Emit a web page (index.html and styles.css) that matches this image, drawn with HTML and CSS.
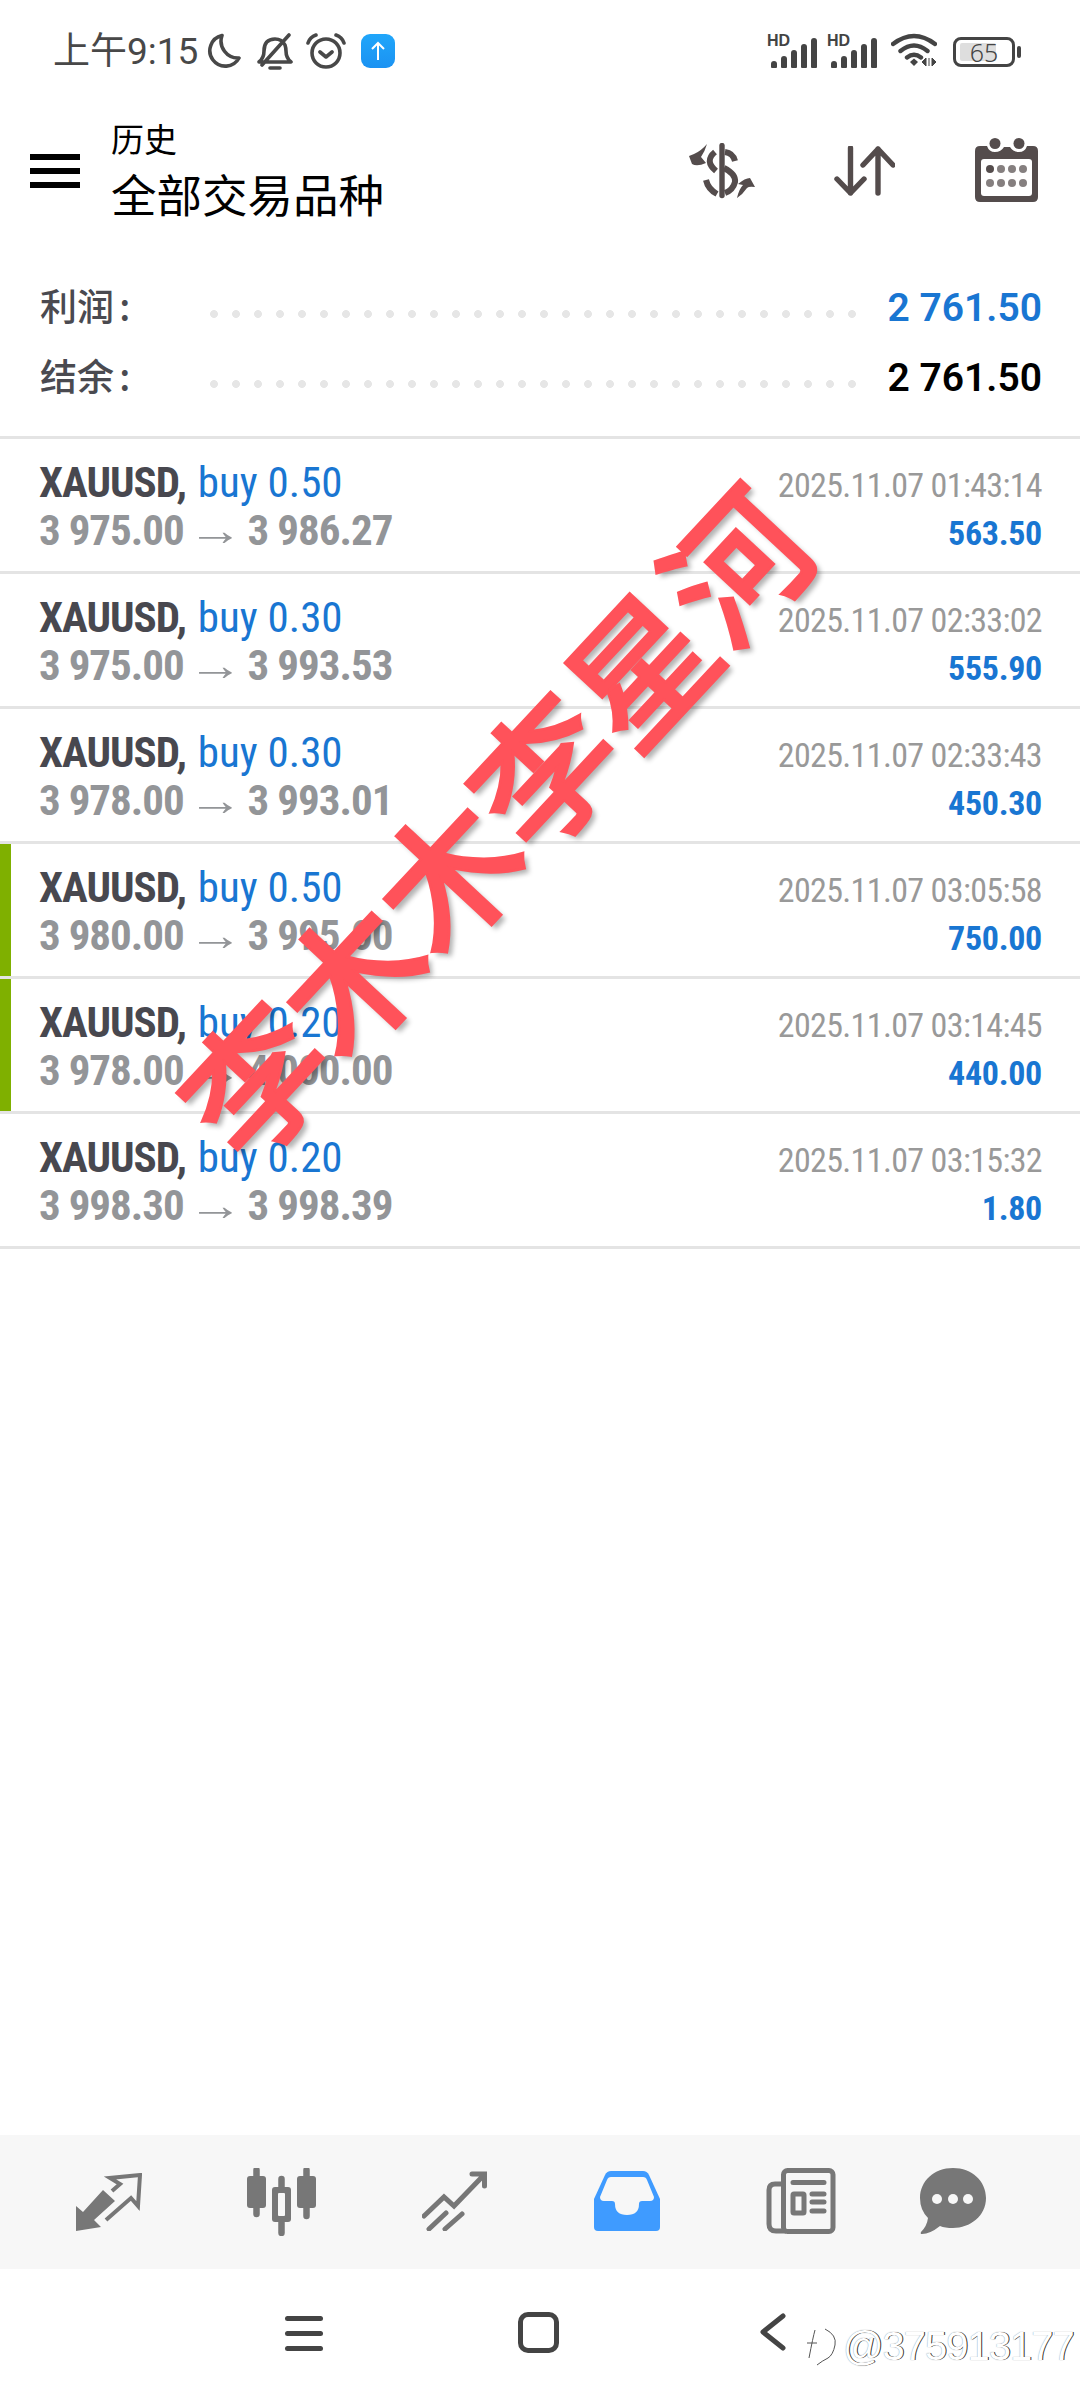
FILE: index.html
```html
<!DOCTYPE html>
<html lang="zh-CN">
<head>
    <meta charset="UTF-8">
    <meta name="viewport" content="width=device-width, initial-scale=1.0">
    <title>历史</title>
    <link rel="stylesheet" href="styles.css">
</head>
<body>
    <!-- 状态栏 -->
    <div class="status-bar">
        <div class="status-left">
            <span class="clock">上午9:15</span>
            <svg class="ic-moon" viewBox="0 0 34 35"><path d="M15 2.5 A15.5 15.5 0 1 0 32 25 A17 17 0 0 1 15 2.5Z" fill="none" stroke="#484848" stroke-width="3.6" stroke-linejoin="round"/></svg>
            <svg class="ic-bell" viewBox="0 0 36 38"><path d="M2 29 Q7 25 7 18 Q7 6 18 6 Q25 6 28 12 Q29 15 29 18 Q29 25 34 29 Z M13 35 H23 M5 32 L32 2" fill="none" stroke="#484848" stroke-width="3.6" stroke-linecap="round" stroke-linejoin="round"/></svg>
            <svg class="ic-alarm" viewBox="0 0 40 36"><circle cx="20" cy="20" r="14" fill="none" stroke="#484848" stroke-width="3.6"/><path d="M14 19 L20 24 L26 19 M2 10 Q4 4 10 2 M38 10 Q36 4 30 2" fill="none" stroke="#484848" stroke-width="3.6" stroke-linecap="round" stroke-linejoin="round"/></svg>
            <span class="app-badge"><svg viewBox="0 0 34 34"><path d="M17 26 V9 M11 15 L17 9 L23 15" fill="none" stroke="#fff" stroke-width="2"/></svg></span>
        </div>
        <div class="status-right">
            <span class="signal"><b>HD</b><i class="s1"></i><i class="s2"></i><i class="s3"></i><i class="s4"></i><i class="s5"></i></span>
            <span class="signal"><b>HD</b><i class="s1"></i><i class="s2"></i><i class="s3"></i><i class="s4"></i><i class="s5"></i></span>
            <svg class="ic-wifi" viewBox="0 0 46 34"><path d="M2 11 Q23 -5 44 11 M9.5 18 Q23 7 36.5 18 M16 24.5 Q23 19 30 24.5" fill="none" stroke="#444" stroke-width="4.4" stroke-linecap="round"/><path d="M19 29 L23 25.5 L27 29 L23 33Z" fill="#444"/><path d="M35 25 V33 L31 29Z M38 25 V33 M41 25 V33 L45 29Z" fill="#444" stroke="#444"/></svg>
            <span class="battery"><span class="battery-fill"></span><span class="battery-num">65</span></span>
            <i class="battery-nub"></i>
        </div>
    </div>

    <!-- 标题区 -->
    <header class="toolbar">
        <div class="menu-btn"><i></i><i></i><i></i></div>
        <div class="titles">
            <div class="title-small">历史</div>
            <div class="title-big">全部交易品种</div>
        </div>
        <div class="tools">
            <svg class="ic-dollar" viewBox="0 0 66 56">
                <path d="M33 2.500 V52.500" fill="none" stroke="#544c4c" stroke-width="5.400" stroke-linecap="round"/>
                <path d="M36 9 Q44 10 46 18 M26 9 Q15 18 27 28 M35 25 Q47 31 46 39 Q44 47 36 50 M17 37 Q19 46 28 51" fill="none" stroke="#544c4c" stroke-width="6"/>
                <path d="M0 13 L5 11 Q12 8 18 1 Q16 8 12 14 L17 20 Q8 24 3 21 Z" fill="#544c4c"/>
                <path d="M48 55 Q50 46 54 42 L49 41 Q56 35 61 35 L66 44 Q60 43 58 45 Q54 51 48 55Z" fill="#544c4c"/>
            </svg>
            <svg class="ic-updown" viewBox="0 0 61 50">
                <path d="M16.500 2 V47 M3 33 L16.500 47 L30 33 M44 47 V3 M29 19 L44 3 L59 19" fill="none" stroke="#544c4c" stroke-width="5.400" stroke-linecap="round" stroke-linejoin="round"/>
            </svg>
            <svg class="ic-calendar" viewBox="0 0 63 64">
                <path d="M5 8 H12 Q14 14 20 14 Q26 14 29 9 H35 Q38 14 44 14 Q50 14 52 8 H58 Q63 8 63 13 V59 Q63 64 58 64 H5 Q0 64 0 59 V13 Q0 8 5 8Z" fill="#544c4c"/>
                <circle cx="20" cy="5.500" r="5.500" fill="#544c4c"/><circle cx="44" cy="5.500" r="5.500" fill="#544c4c"/>
                <rect x="6" y="21" width="51" height="37" rx="3" fill="#fff"/>
                <g fill="#857f7f"><circle cx="15" cy="31" r="4" fill="#544c4c"/><circle cx="26" cy="31" r="4"/><circle cx="37" cy="31" r="4"/><circle cx="48" cy="31" r="4"/><circle cx="15" cy="45" r="4"/><circle cx="26" cy="45" r="4"/><circle cx="37" cy="45" r="4"/><circle cx="48" cy="45" r="4"/></g>
            </svg>
        </div>
    </header>

    <!-- 汇总 -->
    <section class="summary">
        <div class="sum-row"><span class="sum-label">利润 :</span><span class="dots"></span><span class="sum-val blue">2 761.50</span></div>
        <div class="sum-row"><span class="sum-label">结余 :</span><span class="dots"></span><span class="sum-val">2 761.50</span></div>
    </section>

    <!-- 订单列表 -->
    <main class="deals">
        <div class="deal">
            <div class="deal-left">
                <div class="deal-name"><b>XAUUSD,</b> <span>buy 0.50</span></div>
                <div class="deal-price">3 975.00 <em>→</em> 3 986.27</div>
            </div>
            <div class="deal-right"><div class="deal-time">2025.11.07 01:43:14</div><div class="deal-profit">563.50</div></div>
        </div>
        <div class="deal">
            <div class="deal-left">
                <div class="deal-name"><b>XAUUSD,</b> <span>buy 0.30</span></div>
                <div class="deal-price">3 975.00 <em>→</em> 3 993.53</div>
            </div>
            <div class="deal-right"><div class="deal-time">2025.11.07 02:33:02</div><div class="deal-profit">555.90</div></div>
        </div>
        <div class="deal">
            <div class="deal-left">
                <div class="deal-name"><b>XAUUSD,</b> <span>buy 0.30</span></div>
                <div class="deal-price">3 978.00 <em>→</em> 3 993.01</div>
            </div>
            <div class="deal-right"><div class="deal-time">2025.11.07 02:33:43</div><div class="deal-profit">450.30</div></div>
        </div>
        <div class="deal marked">
            <div class="deal-left">
                <div class="deal-name"><b>XAUUSD,</b> <span>buy 0.50</span></div>
                <div class="deal-price">3 980.00 <em>→</em> 3 995.00</div>
            </div>
            <div class="deal-right"><div class="deal-time">2025.11.07 03:05:58</div><div class="deal-profit">750.00</div></div>
        </div>
        <div class="deal marked">
            <div class="deal-left">
                <div class="deal-name"><b>XAUUSD,</b> <span>buy 0.20</span></div>
                <div class="deal-price">3 978.00 <em>→</em> 4 000.00</div>
            </div>
            <div class="deal-right"><div class="deal-time">2025.11.07 03:14:45</div><div class="deal-profit">440.00</div></div>
        </div>
        <div class="deal">
            <div class="deal-left">
                <div class="deal-name"><b>XAUUSD,</b> <span>buy 0.20</span></div>
                <div class="deal-price">3 998.30 <em>→</em> 3 998.39</div>
            </div>
            <div class="deal-right"><div class="deal-time">2025.11.07 03:15:32</div><div class="deal-profit">1.80</div></div>
        </div>
    </main>

    <!-- 底部导航 -->
    <nav class="tabs">
        <svg class="tab-arrows" viewBox="0 0 66 59">
            <path d="M0 58 L0 33 L7 39 L27 17 L39 28 L18 47 L25 54Z" fill="#777"/>
            <path d="M36 18 L44 11 L34 5 L64 2 L62 33 L55 25 L30 47" fill="none" stroke="#777" stroke-width="4"/>
        </svg>
        <svg class="tab-candles" viewBox="0 0 70 68">
            <path d="M9.500 2 V46 M59.500 2 V48 M34.500 11 V65" stroke="#777" stroke-width="6.500" stroke-linecap="round"/>
            <rect y="8" width="19" height="32" rx="3" fill="#777"/>
            <rect x="50" y="8" width="19" height="32" rx="3" fill="#777"/>
            <rect x="25" y="19" width="19" height="35" rx="3" fill="#777"/>
            <rect x="31" y="25" width="7" height="23" rx="1" fill="#f7f7f7"/>
        </svg>
        <svg class="tab-trend" viewBox="0 0 65 60">
            <path d="M2 45 L22 26 L32 35 L60 6 M50 3 H62.500 V15 M7 58 L24 42 M23 58 L40 43" fill="none" stroke="#777" stroke-width="5" stroke-linecap="round"/>
        </svg>
        <svg class="tab-inbox" viewBox="0 0 66 60">
            <path d="M17 0 H49 Q53 0 55 4 L66 28 V56 Q66 60 62 60 H4 Q0 60 0 56 V28 L11 4 Q13 0 17 0Z" fill="#3f9bff"/>
            <path d="M17 6 H49 Q52 6 53 9 L60 26 Q60 30 56 30 H48 Q45 30 45 33 Q45 44 33 44 Q21 44 21 33 Q21 30 18 30 H10 Q6 30 6 26 L13 9 Q14 6 17 6Z" fill="#f7f7f7"/>
        </svg>
        <svg class="tab-news" viewBox="0 0 70 66">
            <rect x="17.500" y="2.500" width="49.500" height="61" rx="4" fill="none" stroke="#777" stroke-width="5"/>
            <path d="M15 16 H9 Q3 16 3 22 V56 Q3 63 10 63 H20" fill="none" stroke="#777" stroke-width="5"/>
            <path d="M27 14.500 H58 M46 26 H58 M46 34 H58 M46 43 H58" stroke="#777" stroke-width="5" stroke-linecap="round"/>
            <rect x="27" y="26" width="11" height="19" rx="1" fill="none" stroke="#777" stroke-width="5"/>
        </svg>
        <svg class="tab-chat" viewBox="0 0 66 66">
            <path d="M33 0 C52 0 66 13 66 30 C66 48 50 60 33 60 Q25 60 20 58 Q10 66 2 66 Q0 66 1 64 Q7 58 8 50 Q0 42 0 30 C0 13 14 0 33 0Z" fill="#777"/>
            <circle cx="17" cy="31" r="5" fill="#f7f7f7"/><circle cx="33" cy="31" r="5" fill="#f7f7f7"/><circle cx="48" cy="31" r="5" fill="#f7f7f7"/>
        </svg>
    </nav>

    <!-- 系统导航 -->
    <div class="sys-nav">
        <div class="sys-menu"><i></i><i></i><i></i></div>
        <div class="sys-home"></div>
        <svg class="sys-back" viewBox="0 0 26 38"><path d="M23 3 L3 19 L23 35" fill="none" stroke="#444" stroke-width="5" stroke-linecap="round" stroke-linejoin="round"/></svg>
    </div>

    <!-- 水印 -->
    <div class="stamp">李木木李星河</div>
    <div class="credit">
        <svg viewBox="0 0 36 42"><path d="M10 5 Q8 12 4 33 M2 18 H12 M20 4 Q32 10 30 20 Q28 30 23 33 Q17 36 12 40" fill="none" stroke="#555" stroke-width="1"/></svg>
        <span>@375913177</span>
    </div>
</body>
</html>
```

FILE: styles.css
```css
/* 基础样式 */
body {
    margin: 0;
    width: 1080px;
    height: 2400px;
    background: #fff;
    font-family: Roboto, "Noto Sans CJK SC", sans-serif;
    display: flex;
    flex-direction: column;
    position: relative;
    overflow: hidden;
}

i, em {
    font-style: normal;
}

svg {
    display: block;
    flex: none;
}

/* 状态栏 */
.status-bar {
    height: 103px;
    padding: 33px 59px 0 53px;
    box-sizing: border-box;
    display: flex;
    justify-content: space-between;
    align-items: flex-start;
}

.status-left, .status-right {
    display: flex;
    align-items: flex-start;
}

.clock {
    font-size: 37px;
    line-height: 37px;
    color: #484848;
    width: 154px;
    font-family: Roboto, "Noto Sans CJK SC", sans-serif;
}

.ic-moon { width: 34px; height: 35px; }
.ic-bell { width: 36px; height: 38px; margin-left: 16px; }
.ic-alarm { width: 40px; height: 36px; margin-left: 13px; }

.app-badge {
    width: 34px;
    height: 34px;
    margin-left: 15px;
    margin-top: 1px;
    border-radius: 9px;
    background: linear-gradient(#20a6fa, #1b92f2);
}

.signal {
    width: 48px;
    height: 32px;
    margin: 3px 12px 0 0;
    position: relative;
    display: flex;
    align-items: flex-end;
    justify-content: flex-end;
    gap: 4px;
}

.signal b {
    position: absolute;
    left: -2px;
    top: -2px;
    font: 700 16px/14px "Liberation Sans", sans-serif;
    color: #444;
}

.signal i {
    width: 6px;
    background: #444;
    border-radius: 3px 3px 1px 1px;
}

.s1 { height: 7px; }
.s2 { height: 12px; }
.s3 { height: 18px; }
.s4 { height: 24px; }
.s5 { height: 30px; }

.ic-wifi { width: 46px; height: 34px; margin-left: 2px; }

.battery {
    width: 62px;
    height: 30px;
    margin: 4px 0 0 16px;
    border: 3px solid #444;
    border-radius: 8px;
    box-sizing: border-box;
    position: relative;
    display: flex;
    justify-content: center;
    align-items: center;
}

.battery-fill {
    position: absolute;
    left: 4px;
    top: 3px;
    bottom: 3px;
    width: 36px;
    background: #dedede;
    border-radius: 2px;
}

.battery-num {
    position: relative;
    font-size: 25px;
    font-weight: 300;
    color: #444;
    font-family: "Noto Sans", sans-serif;
}

.battery-nub {
    width: 4px;
    height: 12px;
    margin: 13px 0 0 2px;
    background: #444;
    border-radius: 2px;
}

/* 标题栏 */
.toolbar {
    height: 137px;
    padding: 0 42px 0 30px;
    display: flex;
    align-items: flex-start;
    font-family: "Noto Sans CJK SC", sans-serif;
    color: #000;
}

.menu-btn {
    width: 50px;
    margin-top: 51px;
    display: flex;
    flex-direction: column;
    gap: 8px;
}

.menu-btn i {
    height: 6px;
    background: #000;
}

.titles {
    margin-left: 31px;
    flex: 1;
}

.title-small {
    margin-top: 15px;
    font-size: 33px;
    line-height: 40px;
}

.title-big {
    margin-top: 7px;
    font-size: 45.500px;
    line-height: 56px;
}

.tools {
    position: relative;
    display: flex;
    align-items: flex-start;
}

.ic-dollar { width: 66px; height: 56px; margin-top: 40px; }
.ic-updown { width: 61px; height: 50px; margin: 43px 0 0 79px; }
.ic-calendar { width: 63px; height: 64px; margin: 35px 0 0 80px; }

/* 汇总 */
.summary {
    height: 199px;
    box-sizing: border-box;
    padding: 44px 38px 0 40px;
    border-bottom: 3px solid #e4e4e4;
}

.sum-row {
    height: 70px;
    display: flex;
    align-items: flex-start;
}

.sum-label {
    width: 170px;
    flex: none;
    margin-top: -1px;
    font-family: "Noto Sans CJK SC", sans-serif;
    font-size: 37px;
    line-height: 44px;
    font-weight: 500;
    word-spacing: -3px;
    color: #4a4a50;
}

.dots {
    width: 650px;
    height: 8px;
    margin-top: 26px;
    background-image: radial-gradient(circle at 4px 4px, #e6e6e6 3.6px, transparent 4.2px);
    background-size: 22px 8px;
    background-repeat: repeat-x;
}

.sum-val {
    margin: 2px 0 0 auto;
    font-size: 39px;
    line-height: 44px;
    font-weight: 600;
    color: #000;
    white-space: nowrap;
}

.blue {
    color: #1976d2;
}

/* 订单列表 */
.deals {
    flex: 1;
}

.deal {
    height: 135px;
    box-sizing: border-box;
    padding: 19px 38px 0 39px;
    border-bottom: 3px solid #e4e4e4;
    display: flex;
    justify-content: space-between;
    position: relative;
}

.deal.marked:before {
    content: '';
    position: absolute;
    left: 0;
    top: 0;
    bottom: 0;
    width: 11px;
    background: #7fb000;
}

.deal-name, .deal-price {
    font-size: 43px;
    line-height: 48px;
    white-space: nowrap;
    font-stretch: 75%;
    letter-spacing: -1px;
}

.deal-name b {
    color: #48484f;
    font-weight: 700;
}

.deal-name span {
    margin-left: 3px;
    color: #1976d2;
    letter-spacing: 0;
}

.deal-price {
    color: #939598;
    font-weight: 700;
}

.deal-price em {
    display: inline-block;
    margin: 0 3px 0 2px;
    font-family: "Liberation Sans", sans-serif;
    font-size: 41px;
    font-weight: 400;
    letter-spacing: 0;
    line-height: 40px;
    transform: translateY(-1px) scale(1.35, 1.05);
}

.deal-right {
    text-align: right;
    font-stretch: 75%;
    font-size: 34px;
}

.deal-time {
    color: #999;
    line-height: 48px;
    margin-top: 3px;
    white-space: nowrap;
    letter-spacing: -0.650px;
}

.deal-profit {
    color: #1976d2;
    font-weight: 700;
    line-height: 48px;
    letter-spacing: -0.300px;
}

/* 底部导航 */
.tabs {
    height: 134px;
    flex: none;
    background: #f7f7f7;
    padding-left: 76px;
    display: flex;
    align-items: flex-start;
    gap: 105px;
}

.tab-arrows { width: 66px; height: 59px; margin-top: 38px; }
.tab-candles { width: 70px; height: 68px; margin-top: 33px; }
.tab-trend { width: 65px; height: 60px; margin: 36px 2px 0 0; }
.tab-inbox { width: 66px; height: 60px; margin: 36px 1px 0 0; }
.tab-news { width: 70px; height: 66px; margin-top: 33px; }
.tab-chat { width: 66px; height: 66px; margin: 33px 0 0 -21px; }

/* 系统导航 */
.sys-nav {
    height: 131px;
    flex: none;
    padding-left: 285px;
    display: flex;
    align-items: flex-start;
}

.sys-menu {
    width: 38px;
    margin-top: 47px;
    display: flex;
    flex-direction: column;
    gap: 10px;
}

.sys-menu i {
    height: 5px;
    border-radius: 3px;
    background: #444;
}

.sys-home {
    width: 41px;
    height: 41px;
    margin: 43px 0 0 195px;
    box-sizing: border-box;
    border: 5px solid #444;
    border-radius: 10px;
}

.sys-back {
    width: 26px;
    height: 38px;
    margin: 44px 0 0 201px;
}

/* 水印 */
.stamp {
    position: absolute;
    left: 68px;
    top: 748px;
    width: 846px;
    font-family: "Noto Sans CJK SC", sans-serif;
    font-size: 141px;
    line-height: 141px;
    font-weight: 500;
    color: #ff525a;
    -webkit-text-stroke: 2.500px #ff525a;
    text-align: center;
    white-space: nowrap;
    text-shadow: 0 6px 5px rgba(0, 0, 0, 0.3);
    transform: rotate(-47deg);
}

.credit {
    position: absolute;
    left: 805px;
    top: 2325px;
    display: flex;
    align-items: center;
    gap: 2px;
}

.credit svg {
    width: 36px;
    height: 42px;
}

.credit span {
    font-family: "Liberation Sans", sans-serif;
    font-size: 40px;
    line-height: 40px;
    letter-spacing: -1px;
    color: #fff;
    text-shadow: 1px 0 0 rgba(0, 0, 0, 0.8), 0 0 1px rgba(0, 0, 0, 0.5);
}
```
